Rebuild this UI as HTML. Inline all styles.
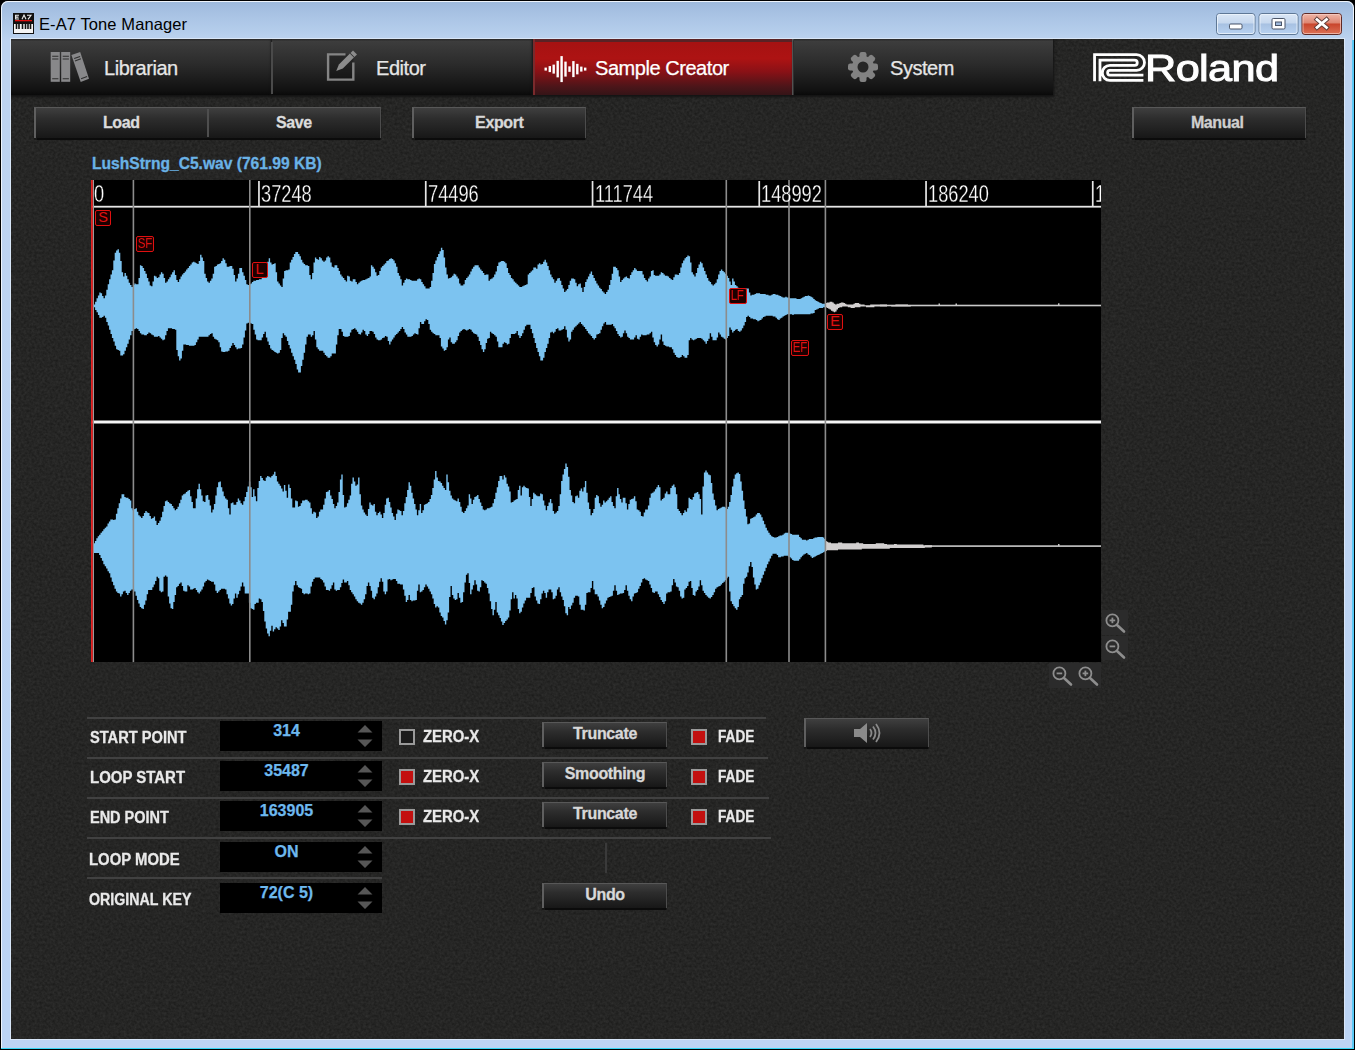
<!DOCTYPE html><html><head><meta charset="utf-8"><title>E-A7 Tone Manager</title><style>
*{box-sizing:border-box;margin:0;padding:0}
html,body{width:1355px;height:1050px;overflow:hidden;background:#000;font-family:"Liberation Sans",sans-serif;}
.abs{position:absolute}
#win{position:absolute;left:0;top:0;width:1355px;height:1050px;background:#000;overflow:hidden}
#frame{position:absolute;left:1px;top:1px;width:1353px;height:1048px;border-radius:7px 7px 0 0;
 background:linear-gradient(180deg,#9db9dc 0px,#a9c3e4 14px,#b4cdeb 30px,#bdd3f0 40px,#bcd4f4 100%);
 box-shadow:inset 0 0 0 1px #eef4fb;}
#cyanb{position:absolute;left:1px;top:1047.600px;width:1353px;height:1.400px;background:#35d6f5}
#cyanr{position:absolute;left:1352.400px;top:40px;width:1.400px;height:1008px;background:#5cc9f5}
#content{position:absolute;left:11px;top:39px;width:1333px;height:1000px;background:#252524;overflow:hidden;box-shadow:0 0 0 1px rgba(226,236,250,.75)}
#title{position:absolute;left:39px;top:14.5px;font-size:16.500px;color:#000;white-space:nowrap;letter-spacing:0.1px}
.tab{position:absolute;top:0;height:56px;box-shadow:0 1px 2px 1px #141414;background:linear-gradient(180deg,#2c2c2c 0,#2c2c2c 1px,#3d3d3d 2px,#2b2b2b 45%,#111 92%,#0a0a0a 100%);color:#e6e6e6;font-size:20px;white-space:nowrap}
.tab span{position:absolute;top:17.600px;letter-spacing:-0.45px;-webkit-text-stroke:0.25px currentColor}
.tsep{position:absolute;top:3px;width:2px;height:52px;background:#4a4a4a}
.btn{position:absolute;background:linear-gradient(180deg,#3f3f3f 0%,#2d2d2d 35%,#171717 100%);border-top:1px solid #585858;border-left:2px solid #5f5f5f;border-right:1.500px solid #4c4c4c;box-shadow:0 1.500px 1px #0b0b0b;color:#d8d8d8;-webkit-text-stroke:0.3px currentColor;font-weight:bold;font-size:16px;text-align:center;white-space:nowrap}
.lbl{position:absolute;color:#e9e9e9;-webkit-text-stroke:0.3px currentColor;font-weight:bold;font-size:16px;white-space:nowrap;transform-origin:0 0}
.val{position:absolute;left:209px;width:162px;height:30px;background:#000}
.val span{position:absolute;left:0;width:133px;text-align:center;top:1.500px;color:#6db8ee;-webkit-text-stroke:0.25px currentColor;font-weight:bold;font-size:16px;white-space:nowrap}
.hl{position:absolute;height:2px;background:#414141}
.cb{position:absolute;width:16px;height:16px;border:2px solid #9a9a9a;background:#1c1c1c}
.cb.on{background:#c3100f}
.mk{position:absolute;border:1.5px solid #e01010;border-radius:2px;color:#e01010;font-size:14.500px;line-height:13px;text-align:center;background:#1c0000;overflow:hidden;letter-spacing:-0.3px}.mk span{display:inline-block}.mk.w span{transform:scaleX(.8);margin:0 -3px}
.rt{position:absolute;top:0px;color:#fff;font-size:24px;white-space:nowrap;transform:scaleX(.76);transform-origin:0 0;-webkit-text-stroke:0.3px #000}
.tick{position:absolute;top:1px;width:2px;height:26px;background:#e8e8e8}
.vl{position:absolute;top:0;width:2px;height:481px;background:#8f8f8f}
</style></head><body>
<div id="win"><div id="frame"></div><div id="cyanb"></div><div id="cyanr"></div>
<svg class="abs" style="left:13px;top:13px" width="21" height="21" viewBox="0 0 21 21"><rect x="0" y="0" width="21" height="21" fill="#111"/><rect x="1" y="11" width="19" height="9" fill="#f4f4f4"/><path d="M6 2.200H2.600V6H6M2.600 4.100H5.500M9 6.300l2-4.300 2 4.300M14 2.200h4l-3 4.200" stroke="#eee" stroke-width="1.100" fill="none"/><rect x="2" y="7" width="17" height="1.3" fill="#e01010"/><path d="M3.5 10v6M6 10v6M9.5 10v6M12.5 10v6M15 10v6M17.5 10v6" stroke="#111" stroke-width="1.6"/></svg>
<div id="title">E-A7 Tone Manager</div>
<svg class="abs" style="left:1214px;top:11px" width="132" height="26" viewBox="0 0 132 26">
<defs><linearGradient id="wb" x1="0" y1="0" x2="0" y2="1"><stop offset="0" stop-color="#dbe7f6"/><stop offset=".45" stop-color="#c6d8ee"/><stop offset=".5" stop-color="#a7c1e2"/><stop offset="1" stop-color="#b9d3f2"/></linearGradient>
<linearGradient id="wr" x1="0" y1="0" x2="0" y2="1"><stop offset="0" stop-color="#efb8aa"/><stop offset=".45" stop-color="#de8672"/><stop offset=".5" stop-color="#c9452c"/><stop offset="1" stop-color="#dd7357"/></linearGradient></defs>
<rect x="2.500" y="2.500" width="38.500" height="21" rx="3" fill="url(#wb)" stroke="#5f7896"/><rect x="3.500" y="3.500" width="36.500" height="19" rx="2" fill="none" stroke="#eef5fc" stroke-opacity=".8"/>
<rect x="45" y="2.500" width="39" height="21" rx="3" fill="url(#wb)" stroke="#5f7896"/><rect x="46" y="3.500" width="37" height="19" rx="2" fill="none" stroke="#eef5fc" stroke-opacity=".8"/>
<rect x="88" y="2.500" width="39.500" height="21" rx="3" fill="url(#wr)" stroke="#5e2a26"/><rect x="89" y="3.500" width="37.500" height="19" rx="2" fill="none" stroke="#f6cfc6" stroke-opacity=".7"/>
<rect x="15.500" y="13" width="12.500" height="5" rx="1.200" fill="#fff" stroke="#4a5568"/>
<rect x="58" y="7.500" width="13" height="10.500" rx="1.200" fill="#fff" stroke="#4a5568"/><rect x="61.500" y="11" width="6" height="3.500" fill="#9db8dc" stroke="#4a5568"/>
<path d="M103 8.500l9.500 8M112.500 8.500l-9.500 8" stroke="#5b3a36" stroke-width="4.600" stroke-linecap="square"/><path d="M103 8.500l9.500 8M112.500 8.500l-9.500 8" stroke="#fff" stroke-width="2.800" stroke-linecap="square"/>
</svg>
<div id="content">
<svg class="abs" style="left:0;top:0" width="1333" height="1000"><filter id="nz" x="0" y="0" width="100%" height="100%" color-interpolation-filters="sRGB"><feTurbulence type="fractalNoise" baseFrequency="0.380" numOctaves="2" seed="7"/><feColorMatrix type="matrix" values="0.100 0 0 0 0.097  0.100 0 0 0 0.097  0.100 0 0 0 0.093  0 0 0 0 1"/></filter><rect width="1333" height="1000" filter="url(#nz)"/></svg>
<div class="tab" style="left:0;width:261px"><span style="left:93px">Librarian</span></div>
<div class="tab" style="left:261px;width:261px"><span style="left:104px">Editor</span></div>
<div class="tab" style="left:522px;width:261px;background:linear-gradient(180deg,#5a2225 0,#5a2225 2.500px,#a61212 3.500px,#ad1313 35%,#8a1116 58%,#4c1519 85%,#351417 100%);color:#fff;border-left:2px solid #7a2a2c;border-right:2px solid #707070"><span style="left:60px">Sample Creator</span></div>
<div class="tab" style="left:783px;width:259px"><span style="left:96px">System</span></div>
<div class="tsep" style="left:260px"></div>
<svg class="abs" style="left:38px;top:12px" width="42" height="34" viewBox="0 0 42 34"><g fill="#88888a"><rect x="1.700" y="1" width="9.100" height="29.800"/><rect x="12.200" y="1" width="9" height="29.800"/><path d="M22.400 4.100L31.200 1L40 27.700L31.700 31Z"/></g><g stroke="#2e2e2e" stroke-width="1.100" fill="none"><path d="M3.200 5.300h6.200M3.200 8h6.200M3.200 27.700h6.200M13.700 5.300h6.200M13.700 8h6.200M13.700 27.700h6.200M25.2 7.5L31.1 5.4M26.0 9.9L31.9 7.8M32.1 27.7L38.1 25.6"/></g></svg>
<svg class="abs" style="left:314px;top:9px" width="36" height="36" viewBox="0 0 36 36"><rect x="3.100" y="6.400" width="25.200" height="25.200" fill="#000" fill-opacity=".22"/><path d="M20.500 6.400H3.100V31.600H28.300V14.500" fill="none" stroke="#858585" stroke-width="2.400"/><path d="M11.200 23L13.900 16.400L24.900 5.600L28.900 9.600L17.800 20.400Z" fill="#8c8c8c"/><path d="M25.500 5L28 2.500L32 6.500L29.400 9Z" fill="#8c8c8c"/></svg>
<svg class="abs" style="left:0;top:0" width="600" height="57" viewBox="0 0 600 57"><g fill="#fff"><rect x="533.5" y="28.60" width="2.400" height="3.0"/><rect x="537.6" y="27.10" width="2.400" height="6.0"/><rect x="541.5" y="25.60" width="2.400" height="9.0"/><rect x="545.5" y="21.85" width="2.400" height="16.5"/><rect x="549.4" y="17.10" width="2.400" height="26.0"/><rect x="553.3" y="22.60" width="2.400" height="15.0"/><rect x="557.3" y="27.35" width="2.400" height="5.5"/><rect x="561.2" y="22.10" width="2.400" height="16.0"/><rect x="565.1" y="24.85" width="2.400" height="10.5"/><rect x="569.1" y="27.60" width="2.400" height="5.0"/><rect x="573.0" y="28.60" width="2.400" height="3.0"/></g></svg>
<svg class="abs" style="left:834.900px;top:10.800px" width="34" height="34" viewBox="-17 -17 34 34"><g fill="#828282"><circle r="11"/><rect x="-3.500" y="-15" width="7" height="8" rx="2.200" transform="rotate(0)"/><rect x="-3.500" y="-15" width="7" height="8" rx="2.200" transform="rotate(45)"/><rect x="-3.500" y="-15" width="7" height="8" rx="2.200" transform="rotate(90)"/><rect x="-3.500" y="-15" width="7" height="8" rx="2.200" transform="rotate(135)"/><rect x="-3.500" y="-15" width="7" height="8" rx="2.200" transform="rotate(180)"/><rect x="-3.500" y="-15" width="7" height="8" rx="2.200" transform="rotate(225)"/><rect x="-3.500" y="-15" width="7" height="8" rx="2.200" transform="rotate(270)"/><rect x="-3.500" y="-15" width="7" height="8" rx="2.200" transform="rotate(315)"/></g><circle r="5.500" fill="#262626"/></svg>
<svg class="abs" style="left:1070px;top:0px" width="80" height="57" viewBox="1081 39 80 57"><g fill="none" stroke="#fff" stroke-width="2.800">
<path d="M1094.560 81.160V54.710H1136.650A7.850 7.850 0 0 1 1136.650 70.410H1109.790A2.330 2.330 0 0 0 1109.790 75.060H1143.400"/>
<path d="M1099.980 81.160V60.080H1134.590A2.660 2.660 0 0 1 1134.590 65.400H1109.790A7.490 7.490 0 0 0 1109.790 80.380H1143.400"/>
</g></svg>
<div class="abs" style="left:1134px;top:8.500px;color:#fff;font-size:36.500px;letter-spacing:-0.5px;-webkit-text-stroke:1px #fff;white-space:nowrap;transform:scaleX(1.185);transform-origin:0 0">Roland</div>
<div class="btn" style="left:23px;top:68px;width:346.500px;height:31px"></div>
<div class="abs" style="left:196px;top:70px;width:2px;height:28px;background:#4e4e4e"></div>
<div class="lbl" style="left:92px;top:74.700px;color:#dcdcdc;letter-spacing:-0.4px">Load</div>
<div class="lbl" style="left:265px;top:74.700px;color:#dcdcdc;letter-spacing:-0.4px">Save</div>
<div class="btn" style="left:400.500px;top:68px;width:174.500px;height:31px;line-height:29.500px;letter-spacing:-0.4px">Export</div>
<div class="btn" style="left:1120.500px;top:68px;width:174.500px;height:31px;line-height:29.500px;letter-spacing:-0.4px;color:#cfcfcf;padding-right:4px">Manual</div>
<div class="lbl" style="left:81px;top:115.800px;color:#6ab2e6;font-size:15.600px">LushStrng_C5.wav (761.99 KB)</div>
<div class="abs" id="wave" style="left:80px;top:141px;width:1010px;height:481.500px;background:#000;overflow:hidden">
<svg class="abs" style="left:0;top:0" width="1011" height="482" viewBox="91 180 1011 482">
<rect x="880" y="304.700" width="221" height="1.600" fill="#c9c9c9"/><rect x="938.500" y="303.500" width="1.500" height="2" fill="#c9c9c9"/><rect x="955.500" y="303.500" width="1.500" height="2" fill="#c9c9c9"/><rect x="1058" y="303.300" width="1.500" height="2" fill="#c9c9c9"/><rect x="1058" y="544" width="1.500" height="2" fill="#c9c9c9"/>
<rect x="925" y="545.300" width="176" height="1.600" fill="#c9c9c9"/>
<path d="M93.7 304.5V304.5H95.1V301.7H96.5V298.2H97.9V295.4H99.3V292.6H100.7V293.3H102.1V296.1H103.5V298.2H104.9V295.4H106.3V289.8H107.7V284.2H109.1V279.3H110.5V274.4H111.9V270.2H113.3V260.4H114.7V252.7H116.1V250.6H117.5V249.2H118.9V252.7H120.3V261.1H121.7V272.3H123.1V276.5H124.5V273.0H125.9V275.8H127.3V279.3H128.7V282.8H130.1V284.9H131.5V287.0H132.9V284.9H134.3V283.5H135.7V284.2H137.1V284.2H138.5V277.9H139.9V265.3H141.3V266.0H142.7V268.1H144.1V270.9H145.5V273.7H146.9V277.9H148.3V281.4H149.7V285.6H151.1V286.3H152.5V281.4H153.9V275.8H155.3V276.5H156.7V277.9H158.1V277.2H159.5V274.4H160.9V272.3H162.3V273.7H163.7V277.9H165.1V282.8H166.5V281.4H167.9V279.3H169.3V277.2H170.7V274.4H172.1V272.3H173.5V270.2H174.9V275.1H176.3V280.0H177.7V282.1H179.1V279.3H180.5V276.5H181.9V274.4H183.3V273.0H184.7V271.6H186.1V269.5H187.5V268.1H188.9V266.0H190.3V264.6H191.7V262.5H193.1V261.8H194.5V262.5H195.9V263.2H197.3V263.9H198.7V261.1H200.1V254.8H201.5V257.6H202.9V261.1H204.3V273.7H205.7V277.9H207.1V281.4H208.5V282.8H209.9V280.7H211.3V278.6H212.7V273.7H214.1V266.7H215.5V266.0H216.9V264.6H218.3V263.9H219.7V263.2H221.1V261.1H222.5V258.3H223.9V259.7H225.3V263.2H226.7V266.7H228.1V266.7H229.5V266.0H230.9V266.0H232.3V268.8H233.7V275.1H235.1V281.4H236.5V278.6H237.9V273.7H239.3V268.1H240.7V268.1H242.1V272.3H243.5V275.8H244.9V280.0H246.3V284.2H247.7V284.9H249.1V284.2H250.5V283.5H251.9V282.1H253.3V280.7H254.7V280.7H256.1V280.0H257.5V280.0H258.9V279.3H260.3V279.3H261.7V276.5H263.1V273.0H264.5V269.5H265.9V266.0H267.3V261.8H268.7V258.3H270.1V262.5H271.5V264.6H272.9V263.9H274.3V263.2H275.7V272.3H277.1V281.4H278.5V283.5H279.9V285.6H281.3V287.0H282.7V278.6H284.1V270.9H285.5V270.2H286.9V270.2H288.3V269.5H289.7V262.5H291.1V259.7H292.5V256.9H293.9V254.1H295.3V252.0H296.7V252.0H298.1V254.1H299.5V256.2H300.9V259.7H302.3V262.5H303.7V263.9H305.1V265.3H306.5V265.3H307.9V266.0H309.3V275.1H310.7V279.3H312.1V273.0H313.5V262.5H314.9V257.6H316.3V259.0H317.7V259.7H319.1V256.9H320.5V258.3H321.9V260.4H323.3V261.8H324.7V260.4H326.1V257.6H327.5V256.2H328.9V257.6H330.3V262.5H331.7V266.7H333.1V267.4H334.5V265.3H335.9V265.3H337.3V268.1H338.7V270.9H340.1V274.4H341.5V276.5H342.9V277.9H344.3V280.0H345.7V281.4H347.1V275.8H348.5V276.5H349.9V280.7H351.3V281.4H352.7V279.3H354.1V279.3H355.5V282.1H356.9V284.2H358.3V282.8H359.7V281.4H361.1V280.7H362.5V280.0H363.9V280.0H365.3V279.3H366.7V278.6H368.1V277.9H369.5V276.5H370.9V265.3H372.3V266.7H373.7V268.8H375.1V272.3H376.5V275.8H377.9V275.1H379.3V270.9H380.7V267.4H382.1V266.0H383.5V264.6H384.9V263.2H386.3V261.1H387.7V260.4H389.1V259.0H390.5V258.3H391.9V259.0H393.3V260.4H394.7V263.2H396.1V266.7H397.5V273.0H398.9V275.8H400.3V279.3H401.7V285.6H403.1V282.8H404.5V280.0H405.9V278.6H407.3V279.3H408.7V279.3H410.1V280.0H411.5V280.7H412.9V280.7H414.3V280.7H415.7V280.7H417.1V279.3H418.5V278.6H419.9V279.3H421.3V282.1H422.7V284.2H424.1V286.3H425.5V288.4H426.9V288.4H428.3V288.4H429.7V287.0H431.1V280.7H432.5V273.0H433.9V263.9H435.3V260.4H436.7V256.9H438.1V254.1H439.5V251.3H440.9V247.8H442.3V249.9H443.7V257.6H445.1V267.4H446.5V274.4H447.9V278.6H449.3V277.9H450.7V277.2H452.1V275.8H453.5V273.7H454.9V274.4H456.3V276.5H457.7V278.6H459.1V283.5H460.5V285.6H461.9V285.6H463.3V284.2H464.7V280.0H466.1V277.9H467.5V276.5H468.9V274.4H470.3V271.6H471.7V268.8H473.1V266.7H474.5V265.3H475.9V265.3H477.3V265.3H478.7V267.4H480.1V269.5H481.5V270.9H482.9V273.0H484.3V275.1H485.7V274.4H487.1V274.4H488.5V280.7H489.9V279.3H491.3V278.6H492.7V277.2H494.1V274.4H495.5V271.6H496.9V266.0H498.3V262.5H499.7V261.8H501.1V261.1H502.5V261.1H503.9V261.8H505.3V263.2H506.7V268.1H508.1V273.0H509.5V275.1H510.9V277.9H512.3V279.3H513.7V281.4H515.1V282.8H516.5V284.2H517.9V285.6H519.3V287.0H520.7V287.0H522.1V286.3H523.5V285.6H524.9V284.9H526.3V284.2H527.7V274.4H529.1V273.0H530.5V271.6H531.9V270.2H533.3V267.4H534.7V267.4H536.1V268.8H537.5V264.6H538.9V263.2H540.3V264.6H541.7V263.9H543.1V261.8H544.5V259.7H545.9V262.5H547.3V266.0H548.7V270.2H550.1V274.4H551.5V277.2H552.9V279.3H554.3V282.8H555.7V280.7H557.1V278.6H558.5V277.9H559.9V280.7H561.3V284.9H562.7V288.4H564.1V291.9H565.5V290.5H566.9V289.1H568.3V284.9H569.7V280.7H571.1V278.6H572.5V278.6H573.9V279.3H575.3V282.8H576.7V286.3H578.1V284.2H579.5V283.5H580.9V287.7H582.3V291.9H583.7V287.0H585.1V282.1H586.5V279.3H587.9V276.5H589.3V273.7H590.7V271.6H592.1V275.1H593.5V277.9H594.9V280.7H596.3V283.5H597.7V285.6H599.1V287.7H600.5V289.1H601.9V291.2H603.3V292.6H604.7V294.0H606.1V291.9H607.5V289.8H608.9V284.9H610.3V280.0H611.7V273.7H613.1V266.7H614.5V266.7H615.9V268.1H617.3V270.2H618.7V276.5H620.1V282.1H621.5V280.0H622.9V278.6H624.3V277.2H625.7V276.5H627.1V277.9H628.5V278.6H629.9V275.1H631.3V272.3H632.7V270.2H634.1V268.1H635.5V269.5H636.9V270.9H638.3V270.9H639.7V270.9H641.1V270.9H642.5V274.4H643.9V277.9H645.3V280.0H646.7V281.4H648.1V278.6H649.5V276.5H650.9V270.9H652.3V270.2H653.7V275.1H655.1V275.8H656.5V275.8H657.9V275.8H659.3V274.4H660.7V272.3H662.1V273.0H663.5V274.4H664.9V275.8H666.3V275.8H667.7V276.5H669.1V277.9H670.5V279.3H671.9V280.0H673.3V277.2H674.7V274.4H676.1V274.4H677.5V275.1H678.9V273.0H680.3V267.4H681.7V263.2H683.1V260.4H684.5V258.3H685.9V256.9H687.3V255.5H688.7V256.2H690.1V262.5H691.5V272.3H692.9V274.4H694.3V276.5H695.7V273.0H697.1V268.1H698.5V264.6H699.9V261.8H701.3V263.2H702.7V267.4H704.1V270.9H705.5V274.4H706.9V277.9H708.3V280.7H709.7V282.1H711.1V284.2H712.5V285.6H713.9V284.2H715.3V282.8H716.7V279.3H718.1V274.4H719.5V270.9H720.9V269.5H722.3V270.9H723.7V272.3H725.1V273.7H726.5V275.8H727.9V277.9H729.3V281.4H730.7V284.9H732.1V278.6H733.5V281.4H734.9V284.9H736.3V286.3H737.7V287.7H739.1V288.4H740.5V288.4H741.9V288.4H743.3V288.4H744.7V288.4H746.1V288.4H747.5V288.4H748.9V292.6H750.3V295.4H751.7V294.7H753.1V294.7H754.5V294.0H755.9V293.3H757.3V293.3H758.7V293.3H760.1V294.0H761.5V294.0H762.9V294.0H764.3V294.0H765.7V294.7H767.1V294.7H768.5V295.4H769.9V295.4H771.3V294.7H772.7V294.0H774.1V294.0H775.5V294.7H776.9V294.7H778.3V295.4H779.7V296.1H781.1V296.8H782.5V297.5H783.9V297.5H785.3V296.8H786.7V297.5H788.1V297.5H789.5V298.2H790.9V298.2H792.3V298.2H793.7V298.2H795.1V298.2H796.5V298.9H797.9V298.9H799.3V298.9H800.7V298.2H802.1V297.5H803.5V296.8H804.9V296.1H806.3V296.1H807.7V295.4H809.1V296.1H810.5V296.8H811.9V297.5H813.3V298.9H814.7V300.3H816.1V301.0H817.5V301.7H818.9V302.4H820.3V303.1H821.7V303.8H823.1V303.8H824.5V303.8H825.4V307.3H824.5V307.3H823.1V308.0H821.7V308.0H820.3V308.0H818.9V308.7H817.5V309.4H816.1V310.1H814.7V312.9H813.3V313.6H811.9V313.6H810.5V314.3H809.1V314.3H807.7V314.3H806.3V314.3H804.9V314.3H803.5V314.3H802.1V314.3H800.7V314.3H799.3V314.3H797.9V314.3H796.5V314.3H795.1V314.3H793.7V315.0H792.3V314.3H790.9V314.3H789.5V314.3H788.1V314.3H786.7V315.0H785.3V315.7H783.9V316.4H782.5V317.8H781.1V318.5H779.7V319.9H778.3V319.2H776.9V317.8H775.5V316.4H774.1V316.4H772.7V315.7H771.3V315.7H769.9V315.7H768.5V315.7H767.1V315.7H765.7V316.4H764.3V317.1H762.9V318.5H761.5V319.9H760.1V320.6H758.7V321.3H757.3V319.9H755.9V319.2H754.5V319.2H753.1V318.5H751.7V318.5H750.3V317.1H748.9V315.7H747.5V317.1H746.1V322.0H744.7V325.5H743.3V328.3H741.9V330.4H740.5V331.8H739.1V331.1H737.7V329.0H736.3V329.7H734.9V331.1H733.5V332.5H732.1V329.7H730.7V327.6H729.3V336.0H727.9V338.1H726.5V339.5H725.1V338.8H723.7V337.4H722.3V336.7H720.9V334.6H719.5V332.5H718.1V337.4H716.7V340.2H715.3V340.2H713.9V340.2H712.5V336.7H711.1V333.2H709.7V338.8H708.3V340.9H706.9V343.7H705.5V341.6H704.1V340.2H702.7V338.8H701.3V338.1H699.9V338.1H698.5V338.1H697.1V338.8H695.7V339.5H694.3V340.2H692.9V339.5H691.5V338.1H690.1V340.2H688.7V354.9H687.3V357.7H685.9V357.7H684.5V356.3H683.1V354.9H681.7V357.0H680.3V357.7H678.9V357.7H677.5V357.0H676.1V354.9H674.7V352.8H673.3V349.3H671.9V347.2H670.5V347.2H669.1V346.5H667.7V346.5H666.3V345.8H664.9V345.1H663.5V341.6H662.1V334.6H660.7V339.5H659.3V344.4H657.9V346.5H656.5V345.1H655.1V342.3H653.7V337.4H652.3V331.8H650.9V333.2H649.5V334.6H648.1V334.6H646.7V335.3H645.3V335.3H643.9V335.3H642.5V334.6H641.1V336.7H639.7V339.5H638.3V338.8H636.9V335.3H635.5V337.4H634.1V339.5H632.7V339.5H631.3V339.5H629.9V338.1H628.5V336.7H627.1V333.2H625.7V330.4H624.3V333.2H622.9V336.7H621.5V337.4H620.1V336.0H618.7V333.9H617.3V331.1H615.9V328.3H614.5V326.2H613.1V324.1H611.7V324.8H610.3V324.8H608.9V324.8H607.5V324.8H606.1V322.0H604.7V323.4H603.3V326.2H601.9V329.7H600.5V333.2H599.1V333.9H597.7V334.6H596.3V338.1H594.9V339.5H593.5V338.1H592.1V336.0H590.7V334.6H589.3V333.2H587.9V331.1H586.5V329.0H585.1V326.9H583.7V325.5H582.3V324.1H580.9V322.0H579.5V323.4H578.1V324.8H576.7V326.2H575.3V327.6H573.9V329.7H572.5V331.8H571.1V339.5H569.7V341.6H568.3V337.4H566.9V329.7H565.5V326.2H564.1V329.0H562.7V329.7H561.3V330.4H559.9V330.4H558.5V328.3H557.1V329.0H555.7V331.8H554.3V333.2H552.9V331.8H551.5V332.5H550.1V338.1H548.7V343.7H547.3V347.9H545.9V352.1H544.5V357.7H543.1V360.5H541.7V360.5H540.3V356.3H538.9V352.1H537.5V347.9H536.1V343.0H534.7V338.1H533.3V333.2H531.9V329.0H530.5V324.8H529.1V324.8H527.7V324.8H526.3V326.2H524.9V329.7H523.5V333.2H522.1V336.0H520.7V338.1H519.3V335.3H517.9V331.1H516.5V333.2H515.1V333.9H513.7V333.9H512.3V333.9H510.9V338.1H509.5V343.7H508.1V344.4H506.7V343.0H505.3V342.3H503.9V343.7H502.5V347.2H501.1V347.2H499.7V347.2H498.3V341.6H496.9V336.7H495.5V335.3H494.1V333.9H492.7V333.2H491.3V331.8H489.9V338.1H488.5V338.8H487.1V343.0H485.7V349.3H484.3V352.1H482.9V349.3H481.5V345.1H480.1V340.9H478.7V336.7H477.3V334.6H475.9V333.9H474.5V333.2H473.1V331.8H471.7V329.7H470.3V329.0H468.9V329.7H467.5V330.4H466.1V329.7H464.7V329.0H463.3V329.7H461.9V331.1H460.5V332.5H459.1V336.0H457.7V340.2H456.3V342.3H454.9V343.7H453.5V343.7H452.1V342.3H450.7V337.4H449.3V339.5H447.9V347.2H446.5V350.0H445.1V350.7H443.7V348.6H442.3V346.5H440.9V338.1H439.5V335.3H438.1V335.3H436.7V335.3H435.3V333.9H433.9V333.2H432.5V331.8H431.1V329.7H429.7V324.1H428.3V319.9H426.9V319.2H425.5V321.3H424.1V324.1H422.7V324.1H421.3V322.0H419.9V328.3H418.5V334.6H417.1V333.9H415.7V333.2H414.3V334.6H412.9V336.0H411.5V336.7H410.1V336.7H408.7V336.7H407.3V334.6H405.9V332.5H404.5V329.0H403.1V326.9H401.7V329.0H400.3V331.1H398.9V332.5H397.5V333.9H396.1V335.3H394.7V337.4H393.3V339.5H391.9V341.6H390.5V344.4H389.1V340.9H387.7V336.7H386.3V336.0H384.9V337.4H383.5V338.1H382.1V339.5H380.7V340.2H379.3V340.2H377.9V339.5H376.5V337.4H375.1V333.9H373.7V331.8H372.3V331.1H370.9V331.1H369.5V333.9H368.1V336.0H366.7V334.6H365.3V331.1H363.9V329.7H362.5V332.5H361.1V334.6H359.7V333.9H358.3V331.8H356.9V329.7H355.5V328.3H354.1V329.0H352.7V329.7H351.3V332.5H349.9V336.0H348.5V336.7H347.1V336.7H345.7V336.7H344.3V336.0H342.9V331.8H341.5V329.0H340.1V329.0H338.7V335.3H337.3V344.4H335.9V353.5H334.5V353.5H333.1V353.5H331.7V356.3H330.3V357.7H328.9V357.7H327.5V356.3H326.1V354.9H324.7V352.8H323.3V350.7H321.9V350.7H320.5V350.7H319.1V349.3H317.7V347.2H316.3V339.5H314.9V331.1H313.5V335.3H312.1V336.7H310.7V334.6H309.3V334.6H307.9V336.7H306.5V344.4H305.1V352.8H303.7V359.8H302.3V366.1H300.9V372.4H299.5V372.4H298.1V369.6H296.7V364.0H295.3V359.8H293.9V356.3H292.5V352.8H291.1V348.6H289.7V345.1H288.3V340.9H286.9V336.7H285.5V335.3H284.1V333.2H282.7V338.1H281.3V350.0H279.9V352.8H278.5V353.5H277.1V352.8H275.7V352.1H274.3V350.7H272.9V350.0H271.5V348.6H270.1V345.1H268.7V341.6H267.3V337.4H265.9V331.8H264.5V333.9H263.1V337.4H261.7V340.2H260.3V340.2H258.9V340.2H257.5V339.5H256.1V334.6H254.7V329.7H253.3V324.1H251.9V323.4H250.5V322.7H249.1V322.7H247.7V323.4H246.3V330.4H244.9V337.4H243.5V344.4H242.1V347.9H240.7V348.6H239.3V348.6H237.9V349.3H236.5V347.2H235.1V345.1H233.7V343.0H232.3V345.8H230.9V347.9H229.5V350.7H228.1V351.4H226.7V351.4H225.3V352.1H223.9V352.1H222.5V351.4H221.1V347.2H219.7V342.3H218.3V340.2H216.9V339.5H215.5V338.8H214.1V336.7H212.7V333.2H211.3V333.9H209.9V335.3H208.5V336.7H207.1V336.7H205.7V336.7H204.3V336.7H202.9V336.7H201.5V336.7H200.1V336.7H198.7V339.5H197.3V342.3H195.9V345.1H194.5V345.8H193.1V345.8H191.7V345.8H190.3V345.8H188.9V345.1H187.5V345.1H186.1V344.4H184.7V344.4H183.3V350.7H181.9V358.4H180.5V360.5H179.1V356.3H177.7V350.0H176.3V329.7H174.9V329.0H173.5V329.0H172.1V328.3H170.7V328.3H169.3V328.3H167.9V331.1H166.5V335.3H165.1V339.5H163.7V340.2H162.3V338.8H160.9V337.4H159.5V336.0H158.1V336.7H156.7V336.7H155.3V336.7H153.9V335.3H152.5V334.6H151.1V333.2H149.7V332.5H148.3V333.9H146.9V335.3H145.5V335.3H144.1V334.6H142.7V334.6H141.3V333.2H139.9V331.1H138.5V329.0H137.1V328.3H135.7V329.0H134.3V330.4H132.9V331.1H131.5V335.3H130.1V339.5H128.7V343.7H127.3V347.2H125.9V350.7H124.5V354.2H123.1V355.6H121.7V355.6H120.3V350.7H118.9V350.0H117.5V349.3H116.1V345.8H114.7V341.6H113.3V338.1H111.9V333.9H110.5V329.7H109.1V325.5H107.7V322.0H106.3V317.8H104.9V315.7H103.5V317.1H102.1V317.8H100.7V317.8H99.3V315.0H97.9V312.2H96.5V310.1H95.1V307.3H93.7Z" fill="#7cc3f0"/>
<path d="M825.4 303.1V303.1H826.8V302.4H828.2V302.4H829.6V301.7H831.0V301.7H832.4V302.4H833.8V303.8H835.2V304.5H836.6V303.8H838.0V303.8H839.4V303.1H840.8V302.4H842.2V302.4H843.6V303.1H845.0V303.8H846.4V304.5H847.8V304.5H849.2V304.5H850.6V304.5H852.0V304.5H853.4V303.8H854.8V303.1H856.2V303.1H857.6V303.1H859.0V303.8H860.4V304.5H861.8V304.5H863.2V304.5H864.6V305.2H866.0V305.2H867.4V305.2H868.8V305.2H870.2V304.5H871.6V304.5H873.0V304.5H874.4V304.5H875.8V304.5H877.2V304.5H878.6V304.5H880.0V304.5H881.4V304.5H882.8V304.5H884.2V304.5H885.6V304.5H887.0V305.2H888.4V305.2H889.8V305.2H891.2V305.2H892.6V305.2H894.0V305.2H895.4V304.5H896.8V304.5H898.2V304.5H899.6V304.5H901.0V304.5H902.4V304.5H903.8V304.5H905.2V304.5H906.6V304.5H908.0V305.2H909.4V305.2H910.8V305.2H911.0V305.9H910.8V306.6H909.4V306.6H908.0V306.6H906.6V306.6H905.2V306.6H903.8V306.6H902.4V306.6H901.0V306.6H899.6V306.6H898.2V306.6H896.8V306.6H895.4V306.6H894.0V306.6H892.6V306.6H891.2V305.9H889.8V305.9H888.4V305.9H887.0V306.6H885.6V306.6H884.2V306.6H882.8V306.6H881.4V306.6H880.0V306.6H878.6V306.6H877.2V306.6H875.8V306.6H874.4V307.3H873.0V307.3H871.6V307.3H870.2V307.3H868.8V307.3H867.4V307.3H866.0V306.6H864.6V306.6H863.2V306.6H861.8V306.6H860.4V307.3H859.0V307.3H857.6V307.3H856.2V307.3H854.8V308.0H853.4V308.0H852.0V308.0H850.6V307.3H849.2V307.3H847.8V306.6H846.4V306.6H845.0V306.6H843.6V306.6H842.2V307.3H840.8V307.3H839.4V308.0H838.0V309.4H836.6V311.5H835.2V312.2H833.8V311.5H832.4V310.8H831.0V309.4H829.6V308.7H828.2V308.0H826.8V307.3H825.4Z" fill="#d2cfcf"/>
<path d="M93.5 543.2V543.2H94.9V541.1H96.3V538.3H97.7V536.2H99.1V534.8H100.5V532.7H101.9V531.3H103.3V529.2H104.7V527.8H106.1V526.4H107.5V523.6H108.9V521.5H110.3V519.4H111.7V519.4H113.1V520.1H114.5V519.4H115.9V513.8H117.3V508.2H118.7V503.3H120.1V498.4H121.5V494.2H122.9V494.2H124.3V497.0H125.7V497.7H127.1V497.7H128.5V499.1H129.9V500.5H131.3V508.2H132.7V510.3H134.1V508.9H135.5V508.2H136.9V511.7H138.3V515.2H139.7V516.6H141.1V518.0H142.5V515.9H143.9V513.1H145.3V511.0H146.7V512.4H148.1V513.1H149.5V515.9H150.9V518.7H152.3V518.0H153.7V516.6H155.1V520.8H156.5V525.0H157.9V522.9H159.3V520.8H160.7V517.3H162.1V511.7H163.5V506.1H164.9V501.2H166.3V500.5H167.7V501.9H169.1V503.3H170.5V504.0H171.9V506.1H173.3V508.2H174.7V510.3H176.1V508.9H177.5V506.8H178.9V503.3H180.3V499.8H181.7V495.6H183.1V494.2H184.5V493.5H185.9V492.1H187.3V490.7H188.7V490.0H190.1V496.3H191.5V501.9H192.9V508.2H194.3V508.2H195.7V498.4H197.1V489.3H198.5V483.7H199.9V489.3H201.3V495.6H202.7V501.2H204.1V501.9H205.5V495.6H206.9V494.9H208.3V499.8H209.7V505.4H211.1V512.4H212.5V509.6H213.9V504.0H215.3V495.6H216.7V487.2H218.1V482.3H219.5V481.6H220.9V487.2H222.3V491.4H223.7V496.3H225.1V498.4H226.5V499.8H227.9V508.2H229.3V514.5H230.7V503.3H232.1V502.6H233.5V504.7H234.9V504.7H236.3V501.9H237.7V498.4H239.1V500.5H240.5V503.3H241.9V504.7H243.3V501.2H244.7V497.0H246.1V492.1H247.5V486.5H248.9V481.6H250.3V487.2H251.7V497.0H253.1V489.3H254.5V496.3H255.9V501.2H257.3V487.9H258.7V480.9H260.1V476.0H261.5V478.1H262.9V480.2H264.3V480.9H265.7V477.4H267.1V476.0H268.5V476.7H269.9V477.4H271.3V476.0H272.7V474.6H274.1V471.8H275.5V476.0H276.9V481.6H278.3V483.7H279.7V485.8H281.1V488.6H282.5V491.4H283.9V485.1H285.3V490.7H286.7V497.7H288.1V484.4H289.5V487.9H290.9V498.4H292.3V507.5H293.7V507.5H295.1V500.5H296.5V501.2H297.9V506.8H299.3V506.1H300.7V503.3H302.1V500.5H303.5V500.5H304.9V499.8H306.3V499.8H307.7V501.2H309.1V502.6H310.5V508.2H311.9V513.8H313.3V511.7H314.7V512.4H316.1V518.0H317.5V516.6H318.9V511.7H320.3V509.6H321.7V509.6H323.1V504.7H324.5V498.4H325.9V492.1H327.3V491.4H328.7V490.0H330.1V495.6H331.5V499.1H332.9V504.0H334.3V508.2H335.7V506.1H337.1V502.6H338.5V492.1H339.9V479.5H341.3V474.6H342.7V494.9H344.1V507.5H345.5V506.8H346.9V503.3H348.3V499.8H349.7V495.6H351.1V483.7H352.5V477.4H353.9V481.6H355.3V485.8H356.7V484.4H358.1V477.4H359.5V494.2H360.9V505.4H362.3V509.6H363.7V512.4H365.1V514.5H366.5V515.9H367.9V508.9H369.3V502.6H370.7V504.7H372.1V505.4H373.5V504.0H374.9V511.7H376.3V515.2H377.7V513.1H379.1V511.7H380.5V514.5H381.9V518.0H383.3V513.1H384.7V504.7H386.1V498.4H387.5V497.7H388.9V501.9H390.3V507.5H391.7V513.1H393.1V516.6H394.5V520.1H395.9V513.8H397.3V509.6H398.7V510.3H400.1V511.0H401.5V515.2H402.9V511.0H404.3V503.3H405.7V497.0H407.1V490.0H408.5V482.3H409.9V485.8H411.3V492.8H412.7V498.4H414.1V504.0H415.5V509.6H416.9V515.2H418.3V510.3H419.7V504.0H421.1V513.1H422.5V510.3H423.9V504.7H425.3V504.0H426.7V503.3H428.1V501.9H429.5V499.1H430.9V494.9H432.3V487.9H433.7V479.5H435.1V471.1H436.5V477.4H437.9V480.9H439.3V481.6H440.7V483.0H442.1V485.8H443.5V487.9H444.9V490.0H446.3V474.6H447.7V482.3H449.1V490.7H450.5V495.6H451.9V498.4H453.3V499.8H454.7V500.5H456.1V501.2H457.5V498.4H458.9V501.9H460.3V506.8H461.7V511.7H463.1V513.1H464.5V511.0H465.9V508.2H467.3V505.4H468.7V494.2H470.1V498.4H471.5V504.0H472.9V499.8H474.3V497.0H475.7V496.3H477.1V494.9H478.5V499.1H479.9V502.6H481.3V506.1H482.7V509.6H484.1V510.3H485.5V509.6H486.9V508.2H488.3V508.2H489.7V507.5H491.1V506.8H492.5V503.3H493.9V499.1H495.3V492.8H496.7V487.2H498.1V480.9H499.5V476.0H500.9V476.0H502.3V479.5H503.7V475.3H505.1V477.4H506.5V483.7H507.9V486.5H509.3V491.4H510.7V502.6H512.1V501.9H513.5V500.5H514.9V499.8H516.3V499.1H517.7V490.0H519.1V485.8H520.5V495.6H521.9V487.2H523.3V485.8H524.7V487.2H526.1V487.9H527.5V488.6H528.9V497.0H530.3V506.1H531.7V499.1H533.1V492.8H534.5V494.2H535.9V495.6H537.3V496.3H538.7V496.3H540.1V493.5H541.5V494.2H542.9V500.5H544.3V505.4H545.7V510.3H547.1V506.1H548.5V502.6H549.9V499.1H551.3V503.3H552.7V511.0H554.1V513.8H555.5V512.4H556.9V511.0H558.3V506.1H559.7V494.2H561.1V480.9H562.5V474.6H563.9V469.0H565.3V463.4H566.7V466.9H568.1V476.7H569.5V490.0H570.9V495.6H572.3V501.9H573.7V503.3H575.1V496.3H576.5V495.6H577.9V497.7H579.3V490.7H580.7V488.6H582.1V491.4H583.5V487.2H584.9V480.9H586.3V492.8H587.7V502.6H589.1V508.9H590.5V515.2H591.9V513.1H593.3V508.9H594.7V497.7H596.1V494.9H597.5V496.3H598.9V503.3H600.3V506.8H601.7V504.7H603.1V500.5H604.5V502.6H605.9V501.2H607.3V499.8H608.7V497.7H610.1V496.3H611.5V501.9H612.9V506.1H614.3V508.2H615.7V496.3H617.1V487.9H618.5V494.2H619.9V499.1H621.3V502.6H622.7V497.7H624.1V497.7H625.5V503.3H626.9V509.6H628.3V504.0H629.7V499.8H631.1V499.1H632.5V498.4H633.9V496.3H635.3V501.2H636.7V509.6H638.1V510.3H639.5V511.7H640.9V515.9H642.3V516.6H643.7V512.4H645.1V509.6H646.5V509.6H647.9V505.4H649.3V497.7H650.7V493.5H652.1V492.8H653.5V491.4H654.9V489.3H656.3V487.2H657.7V485.1H659.1V487.2H660.5V500.5H661.9V499.1H663.3V497.7H664.7V493.5H666.1V491.4H667.5V494.2H668.9V494.2H670.3V487.9H671.7V485.8H673.1V484.4H674.5V487.2H675.9V494.2H677.3V508.9H678.7V511.0H680.1V513.1H681.5V515.2H682.9V513.1H684.3V510.3H685.7V511.7H687.1V508.2H688.5V497.7H689.9V499.1H691.3V499.8H692.7V497.0H694.1V493.5H695.5V492.8H696.9V492.1H698.3V494.2H699.7V499.1H701.1V514.5H702.5V486.5H703.9V472.5H705.3V470.4H706.7V472.5H708.1V474.6H709.5V475.3H710.9V483.0H712.3V493.5H713.7V499.8H715.1V505.4H716.5V510.3H717.9V508.9H719.3V508.2H720.7V507.5H722.1V506.8H723.5V506.8H724.9V507.5H726.3V508.9H727.7V506.8H729.1V501.9H730.5V494.9H731.9V486.5H733.3V478.8H734.7V474.6H736.1V473.2H737.5V472.5H738.9V473.9H740.3V481.6H741.7V490.7H743.1V500.5H744.5V508.9H745.9V516.6H747.3V524.3H748.7V523.6H750.1V518.7H751.5V518.0H752.9V517.3H754.3V516.6H755.7V514.5H757.1V513.1H758.5V513.1H759.9V514.5H761.3V517.3H762.7V520.8H764.1V524.3H765.5V527.8H766.9V530.6H768.3V532.7H769.7V534.8H771.1V536.2H772.5V536.9H773.9V537.6H775.3V537.6H776.7V536.9H778.1V536.2H779.5V535.5H780.9V535.5H782.3V534.8H783.7V533.4H785.1V532.7H786.5V532.7H787.9V532.7H789.3V533.4H790.7V534.1H792.1V534.8H793.5V534.8H794.9V534.8H796.3V534.8H797.7V534.8H799.1V536.9H800.5V538.3H801.9V539.7H803.3V539.7H804.7V539.7H806.1V540.4H807.5V539.7H808.9V539.0H810.3V539.0H811.7V539.0H813.1V538.3H814.5V537.6H815.9V537.6H817.3V536.9H818.7V536.9H820.1V536.9H821.5V536.9H822.9V537.6H824.3V539.0H825.4V551.6H824.3V552.3H822.9V553.0H821.5V553.7H820.1V554.4H818.7V555.1H817.3V555.8H815.9V556.5H814.5V557.2H813.1V557.9H811.7V556.5H810.3V555.1H808.9V554.4H807.5V553.0H806.1V553.7H804.7V554.4H803.3V555.8H801.9V557.2H800.5V559.3H799.1V560.7H797.7V560.7H796.3V560.7H794.9V560.7H793.5V560.0H792.1V558.6H790.7V557.2H789.3V556.5H787.9V555.8H786.5V555.8H785.1V555.8H783.7V556.5H782.3V556.5H780.9V557.2H779.5V557.2H778.1V555.1H776.7V553.7H775.3V553.7H773.9V553.7H772.5V555.8H771.1V558.6H769.7V561.4H768.3V564.2H766.9V567.7H765.5V571.2H764.1V574.7H762.7V578.2H761.3V582.4H759.9V585.2H758.5V588.7H757.1V589.4H755.7V584.5H754.3V577.5H752.9V567.0H751.5V562.1H750.1V566.3H748.7V572.6H747.3V576.8H745.9V578.2H744.5V583.8H743.1V595.0H741.7V597.1H740.3V599.2H738.9V606.9H737.5V609.7H736.1V608.3H734.7V606.2H733.3V604.1H731.9V601.3H730.5V591.5H729.1V576.8H727.7V578.2H726.3V580.3H724.9V581.7H723.5V583.1H722.1V584.5H720.7V585.9H719.3V586.6H717.9V587.3H716.5V588.7H715.1V592.2H713.7V595.0H712.3V597.1H710.9V598.5H709.5V597.8H708.1V596.4H706.7V595.0H705.3V592.9H703.9V590.8H702.5V585.2H701.1V580.3H699.7V586.6H698.3V590.1H696.9V591.5H695.5V595.7H694.1V595.0H692.7V588.0H691.3V581.0H689.9V581.7H688.5V585.9H687.1V588.0H685.7V589.4H684.3V597.8H682.9V598.5H681.5V596.4H680.1V590.8H678.7V587.3H677.3V586.6H675.9V582.4H674.5V578.9H673.1V585.2H671.7V591.5H670.3V592.2H668.9V592.2H667.5V593.6H666.1V601.3H664.7V604.1H663.3V602.0H661.9V599.9H660.5V597.1H659.1V594.3H657.7V591.5H656.3V591.5H654.9V592.9H653.5V592.2H652.1V588.0H650.7V584.5H649.3V581.0H647.9V580.3H646.5V579.6H645.1V578.2H643.7V578.9H642.3V582.4H640.9V585.9H639.5V588.7H638.1V592.2H636.7V592.9H635.3V593.6H633.9V596.4H632.5V601.3H631.1V599.2H629.7V595.7H628.3V590.8H626.9V585.2H625.5V590.1H624.1V592.9H622.7V593.6H621.3V593.6H619.9V594.3H618.5V595.0H617.1V590.8H615.7V585.2H614.3V590.8H612.9V595.7H611.5V596.4H610.1V597.1H608.7V597.8H607.3V600.6H605.9V603.4H604.5V606.9H603.1V608.3H601.7V604.8H600.3V600.6H598.9V596.4H597.5V594.3H596.1V594.3H594.7V589.4H593.3V581.0H591.9V588.0H590.5V592.2H589.1V592.2H587.7V592.9H586.3V604.8H584.9V610.4H583.5V609.7H582.1V609.7H580.7V604.8H579.3V596.4H577.9V595.7H576.5V595.7H575.1V597.8H573.7V602.7H572.3V605.5H570.9V609.0H569.5V606.9H568.1V615.3H566.7V613.2H565.3V606.2H563.9V599.9H562.5V596.4H561.1V592.2H559.7V587.3H558.3V589.4H556.9V595.7H555.5V598.5H554.1V599.2H552.7V592.2H551.3V589.4H549.9V589.4H548.5V592.2H547.1V597.8H545.7V592.9H544.3V590.8H542.9V593.6H541.5V599.2H540.1V604.1H538.7V603.4H537.3V600.6H535.9V596.4H534.5V587.3H533.1V588.0H531.7V592.9H530.3V597.8H528.9V597.8H527.5V597.8H526.1V600.6H524.7V603.4H523.3V607.6H521.9V611.8H520.5V613.2H519.1V609.0H517.7V598.5H516.3V595.0H514.9V598.5H513.5V592.2H512.1V599.2H510.7V610.4H509.3V617.4H507.9V619.5H506.5V620.9H505.1V623.0H503.7V625.1H502.3V621.6H500.9V618.1H499.5V615.3H498.1V612.5H496.7V602.0H495.3V609.7H493.9V615.3H492.5V609.0H491.1V601.3H489.7V593.6H488.3V588.0H486.9V583.8H485.5V582.4H484.1V581.0H482.7V580.3H481.3V587.3H479.9V591.5H478.5V590.8H477.1V584.5H475.7V580.3H474.3V585.2H472.9V589.4H471.5V594.3H470.1V583.1H468.7V573.3H467.3V574.7H465.9V582.4H464.5V592.2H463.1V602.0H461.7V602.7H460.3V597.8H458.9V592.9H457.5V599.2H456.1V599.9H454.7V598.5H453.3V595.0H451.9V585.9H450.5V597.1H449.1V612.5H447.7V620.2H446.3V624.4H444.9V620.9H443.5V617.4H442.1V616.0H440.7V612.5H439.3V607.6H437.9V606.2H436.5V607.6H435.1V604.1H433.7V598.5H432.3V594.3H430.9V591.5H429.5V588.7H428.1V586.6H426.7V584.5H425.3V587.3H423.9V590.1H422.5V591.5H421.1V592.2H419.7V584.5H418.3V590.8H416.9V599.9H415.5V600.6H414.1V600.6H412.7V601.3H411.3V599.9H409.9V595.0H408.5V599.9H407.1V602.0H405.7V595.7H404.3V589.4H402.9V584.5H401.5V584.5H400.1V583.8H398.7V583.8H397.3V581.0H395.9V578.9H394.5V578.9H393.1V579.6H391.7V580.3H390.3V578.9H388.9V579.6H387.5V591.5H386.1V594.3H384.7V591.5H383.3V581.7H381.9V578.2H380.5V581.7H379.1V587.3H377.7V593.6H376.3V596.4H374.9V599.2H373.5V597.8H372.1V590.8H370.7V585.9H369.3V582.4H367.9V585.9H366.5V594.3H365.1V599.2H363.7V602.7H362.3V604.8H360.9V603.4H359.5V602.7H358.1V601.3H356.7V599.2H355.3V596.4H353.9V594.3H352.5V592.2H351.1V590.1H349.7V585.2H348.3V581.0H346.9V582.4H345.5V582.4H344.1V579.6H342.7V583.1H341.3V587.3H339.9V590.1H338.5V590.1H337.1V590.8H335.7V589.4H334.3V582.4H332.9V585.2H331.5V588.7H330.1V590.8H328.7V590.1H327.3V590.1H325.9V586.6H324.5V582.4H323.1V580.3H321.7V578.9H320.3V577.5H318.9V577.5H317.5V577.5H316.1V577.5H314.7V578.9H313.3V581.7H311.9V586.6H310.5V593.6H309.1V594.3H307.7V593.6H306.3V593.6H304.9V594.3H303.5V592.9H302.1V588.7H300.7V588.0H299.3V587.3H297.9V585.2H296.5V581.0H295.1V585.2H293.7V591.5H292.3V604.8H290.9V611.8H289.5V611.8H288.1V619.5H286.7V626.5H285.3V626.5H283.9V623.0H282.5V620.2H281.1V626.5H279.7V630.0H278.3V628.6H276.9V627.2H275.5V629.3H274.1V631.4H272.7V625.8H271.3V630.7H269.9V636.3H268.5V633.5H267.1V628.6H265.7V621.6H264.3V611.1H262.9V602.0H261.5V599.2H260.1V598.5H258.7V602.7H257.3V602.7H255.9V604.1H254.5V609.7H253.1V609.0H251.7V608.3H250.3V602.7H248.9V593.6H247.5V593.6H246.1V593.6H244.7V586.6H243.3V582.4H241.9V586.6H240.5V590.8H239.1V594.3H237.7V597.8H236.3V593.6H234.9V598.5H233.5V604.1H232.1V605.5H230.7V603.4H229.3V598.5H227.9V594.3H226.5V589.4H225.1V588.7H223.7V588.7H222.3V588.7H220.9V590.1H219.5V591.5H218.1V592.9H216.7V590.8H215.3V584.5H213.9V581.7H212.5V581.7H211.1V581.0H209.7V580.3H208.3V579.6H206.9V581.0H205.5V582.4H204.1V586.6H202.7V589.4H201.3V591.5H199.9V593.6H198.5V592.2H197.1V590.1H195.7V588.0H194.3V588.7H192.9V589.4H191.5V589.4H190.1V586.6H188.7V585.2H187.3V591.5H185.9V591.5H184.5V590.8H183.1V585.9H181.7V582.4H180.3V583.8H178.9V585.9H177.5V587.3H176.1V595.0H174.7V602.0H173.3V609.0H171.9V608.3H170.5V603.4H169.1V596.4H167.7V576.8H166.3V575.4H164.9V576.8H163.5V591.5H162.1V592.2H160.7V590.8H159.3V578.2H157.9V576.8H156.5V581.0H155.1V584.5H153.7V587.3H152.3V590.1H150.9V590.1H149.5V590.1H148.1V594.3H146.7V600.6H145.3V604.8H143.9V609.0H142.5V608.3H141.1V606.9H139.7V603.4H138.3V599.9H136.9V595.7H135.5V591.5H134.1V589.4H132.7V589.4H131.3V590.8H129.9V592.9H128.5V595.0H127.1V592.9H125.7V590.8H124.3V591.5H122.9V594.3H121.5V596.4H120.1V593.6H118.7V592.9H117.3V591.5H115.9V588.7H114.5V585.2H113.1V581.7H111.7V577.5H110.3V573.3H108.9V571.2H107.5V568.4H106.1V566.3H104.7V564.2H103.3V560.7H101.9V557.9H100.5V555.1H99.1V553.0H97.7V553.0H96.3V553.0H94.9V553.0H93.5Z" fill="#7cc3f0"/>
<path d="M825.4 541.1V541.1H826.8V541.8H828.2V542.5H829.6V542.5H831.0V543.2H832.4V543.2H833.8V543.2H835.2V543.2H836.6V543.2H838.0V542.5H839.4V542.5H840.8V542.5H842.2V543.2H843.6V543.2H845.0V543.2H846.4V543.2H847.8V543.2H849.2V543.2H850.6V543.2H852.0V543.2H853.4V543.2H854.8V543.2H856.2V542.5H857.6V542.5H859.0V543.2H860.4V543.2H861.8V543.2H863.2V543.9H864.6V543.9H866.0V543.9H867.4V543.9H868.8V543.9H870.2V543.9H871.6V543.9H873.0V543.9H874.4V543.9H875.8V543.2H877.2V543.2H878.6V543.2H880.0V543.2H881.4V543.2H882.8V543.2H884.2V543.9H885.6V543.9H887.0V544.6H888.4V544.6H889.8V544.6H891.2V544.6H892.6V544.6H894.0V543.9H895.4V543.9H896.8V544.6H898.2V544.6H899.6V544.6H901.0V544.6H902.4V544.6H903.8V544.6H905.2V544.6H906.6V544.6H908.0V544.6H909.4V544.6H910.8V544.6H912.2V544.6H913.6V544.6H915.0V544.6H916.4V544.6H917.8V544.6H919.2V544.6H920.6V544.6H922.0V544.6H923.4V545.3H924.8V545.3H926.2V545.3H927.6V545.3H929.0V545.3H930.4V545.3H931.8V545.3H932.0V546.7H931.8V547.4H930.4V547.4H929.0V547.4H927.6V547.4H926.2V547.4H924.8V548.1H923.4V548.1H922.0V548.1H920.6V548.1H919.2V548.1H917.8V548.1H916.4V548.1H915.0V548.1H913.6V548.1H912.2V548.1H910.8V548.1H909.4V548.1H908.0V548.1H906.6V548.1H905.2V548.1H903.8V548.1H902.4V548.1H901.0V548.1H899.6V548.1H898.2V548.1H896.8V548.1H895.4V548.1H894.0V548.1H892.6V548.1H891.2V548.1H889.8V548.8H888.4V548.8H887.0V548.8H885.6V548.8H884.2V548.8H882.8V548.8H881.4V548.8H880.0V548.8H878.6V548.8H877.2V548.8H875.8V548.8H874.4V548.8H873.0V548.8H871.6V548.8H870.2V548.8H868.8V548.8H867.4V548.8H866.0V548.8H864.6V548.8H863.2V548.8H861.8V549.5H860.4V549.5H859.0V549.5H857.6V549.5H856.2V549.5H854.8V549.5H853.4V549.5H852.0V549.5H850.6V549.5H849.2V549.5H847.8V549.5H846.4V549.5H845.0V549.5H843.6V549.5H842.2V549.5H840.8V549.5H839.4V549.5H838.0V550.2H836.6V550.2H835.2V550.2H833.8V550.2H832.4V550.2H831.0V550.2H829.6V550.2H828.2V550.2H826.8V550.9H825.4Z" fill="#d2cfcf"/>
<rect x="91" y="420.500" width="1011" height="3" fill="#f4f4f4"/>
<rect x="91" y="205.800" width="1011" height="1.800" fill="#e6e6e6"/>
<rect x="258.1" y="181" width="1.700" height="26" fill="#e6e6e6"/>
<rect x="424.9" y="181" width="1.700" height="26" fill="#e6e6e6"/>
<rect x="591.7" y="181" width="1.700" height="26" fill="#e6e6e6"/>
<rect x="758.4" y="181" width="1.700" height="26" fill="#e6e6e6"/>
<rect x="925.2" y="181" width="1.700" height="26" fill="#e6e6e6"/>
<rect x="1091.9" y="181" width="1.700" height="26" fill="#e6e6e6"/>
<rect x="132.6" y="180" width="1.600" height="482" fill="#8c8c8c"/>
<rect x="249.0" y="180" width="1.600" height="482" fill="#8c8c8c"/>
<rect x="725.5" y="180" width="1.600" height="482" fill="#8c8c8c"/>
<rect x="788.2" y="180" width="1.600" height="482" fill="#8c8c8c"/>
<rect x="824.6" y="180" width="1.600" height="482" fill="#8c8c8c"/>
<rect x="92.600" y="180" width="1.400" height="482" fill="#9a9a9a"/>
<rect x="91" y="180" width="1.800" height="482" fill="#e32222"/>
</svg>
<div class="rt" style="left:3.2px">0</div>
<div class="rt" style="left:169.9px">37248</div>
<div class="rt" style="left:336.7px">74496</div>
<div class="rt" style="left:503.5px">111744</div>
<div class="rt" style="left:670.2px">148992</div>
<div class="rt" style="left:837.0px">186240</div>
<div class="rt" style="left:1003.7px">1</div>
<div class="mk" style="left:4.0px;top:29.5px;width:16px;height:16px"><span>S</span></div>
<div class="mk w" style="left:45.0px;top:55.5px;width:18px;height:16px"><span>SF</span></div>
<div class="mk" style="left:160.5px;top:81.5px;width:16px;height:16px"><span>L</span></div>
<div class="mk w" style="left:637.5px;top:108.0px;width:18px;height:16px"><span>LF</span></div>
<div class="mk w" style="left:700.0px;top:160.0px;width:18px;height:16px"><span>EF</span></div>
<div class="mk" style="left:736.0px;top:134.0px;width:16px;height:16px"><span>E</span></div>
</div>
<svg class="abs" style="left:1090.5px;top:571.0px" width="26" height="25" viewBox="0 0 26 25"><rect width="26" height="25" fill="#2b2b2b"/><circle cx="10.400" cy="10.400" r="6" fill="none" stroke="#8e8e8e" stroke-width="1.800"/><path d="M15 15l7 6.500" stroke="#8e8e8e" stroke-width="2.600" stroke-linecap="round"/><path d="M7.600 10.400h5.600" stroke="#8e8e8e" stroke-width="1.800"/><path d="M10.400 7.600v5.600" stroke="#8e8e8e" stroke-width="1.800"/></svg>
<svg class="abs" style="left:1090.5px;top:597.0px" width="26" height="24" viewBox="0 0 26 24"><rect width="26" height="24" fill="#2b2b2b"/><circle cx="10.400" cy="10.400" r="6" fill="none" stroke="#8e8e8e" stroke-width="1.800"/><path d="M15 15l7 6.500" stroke="#8e8e8e" stroke-width="2.600" stroke-linecap="round"/><path d="M7.600 10.400h5.600" stroke="#8e8e8e" stroke-width="1.800"/></svg>
<svg class="abs" style="left:1038.0px;top:623.5px" width="26" height="25" viewBox="0 0 26 25"><rect width="26" height="25" fill="#2b2b2b"/><circle cx="10.400" cy="10.400" r="6" fill="none" stroke="#8e8e8e" stroke-width="1.800"/><path d="M15 15l7 6.500" stroke="#8e8e8e" stroke-width="2.600" stroke-linecap="round"/><path d="M7.600 10.400h5.600" stroke="#8e8e8e" stroke-width="1.800"/></svg>
<svg class="abs" style="left:1064.0px;top:623.5px" width="26" height="25" viewBox="0 0 26 25"><rect width="26" height="25" fill="#2b2b2b"/><circle cx="10.400" cy="10.400" r="6" fill="none" stroke="#8e8e8e" stroke-width="1.800"/><path d="M15 15l7 6.500" stroke="#8e8e8e" stroke-width="2.600" stroke-linecap="round"/><path d="M7.600 10.400h5.600" stroke="#8e8e8e" stroke-width="1.800"/><path d="M10.400 7.600v5.600" stroke="#8e8e8e" stroke-width="1.800"/></svg>
<div class="lbl" style="left:78.5px;top:689.5px;transform:scaleX(0.915)">START POINT</div>
<div class="val" style="top:681.5px"><span>314</span><svg class="abs" style="left:137px;top:4px" width="16" height="22" viewBox="0 0 16 22"><path d="M8 0l7.500 7.500h-15zM8 22l7.500-7.500h-15z" fill="#565656"/></svg></div>
<div class="lbl" style="left:78.5px;top:729.5px;transform:scaleX(0.935)">LOOP START</div>
<div class="val" style="top:721.5px"><span>35487</span><svg class="abs" style="left:137px;top:4px" width="16" height="22" viewBox="0 0 16 22"><path d="M8 0l7.500 7.500h-15zM8 22l7.500-7.500h-15z" fill="#565656"/></svg></div>
<div class="lbl" style="left:78.5px;top:769.5px;transform:scaleX(0.905)">END POINT</div>
<div class="val" style="top:761.5px"><span>163905</span><svg class="abs" style="left:137px;top:4px" width="16" height="22" viewBox="0 0 16 22"><path d="M8 0l7.500 7.500h-15zM8 22l7.500-7.500h-15z" fill="#565656"/></svg></div>
<div class="lbl" style="left:77.5px;top:811.5px;transform:scaleX(0.930)">LOOP MODE</div>
<div class="val" style="top:802.5px"><span>ON</span><svg class="abs" style="left:137px;top:4px" width="16" height="22" viewBox="0 0 16 22"><path d="M8 0l7.500 7.500h-15zM8 22l7.500-7.500h-15z" fill="#565656"/></svg></div>
<div class="lbl" style="left:77.5px;top:851.8px;transform:scaleX(0.888)">ORIGINAL KEY</div>
<div class="val" style="top:843.8px"><span>72(C 5)</span><svg class="abs" style="left:137px;top:4px" width="16" height="22" viewBox="0 0 16 22"><path d="M8 0l7.500 7.500h-15zM8 22l7.500-7.500h-15z" fill="#565656"/></svg></div>
<div class="hl" style="left:76px;top:677.5px;width:679px"></div>
<div class="hl" style="left:76px;top:717.5px;width:681px"></div>
<div class="hl" style="left:76px;top:758.0px;width:682px"></div>
<div class="hl" style="left:76px;top:798.0px;width:684px"></div>
<div class="hl" style="left:76px;top:838px;width:295px"></div>
<div class="cb" style="left:387.500px;top:689.5px"></div>
<div class="lbl" style="left:412px;top:688.9px;transform:scaleX(.93)">ZERO-X</div>
<div class="cb on" style="left:679.500px;top:689.5px"></div>
<div class="lbl" style="left:707px;top:688.9px;transform:scaleX(.85)">FADE</div>
<div class="cb on" style="left:387.500px;top:729.5px"></div>
<div class="lbl" style="left:412px;top:728.9px;transform:scaleX(.93)">ZERO-X</div>
<div class="cb on" style="left:679.500px;top:729.5px"></div>
<div class="lbl" style="left:707px;top:728.9px;transform:scaleX(.85)">FADE</div>
<div class="cb on" style="left:387.500px;top:769.5px"></div>
<div class="lbl" style="left:412px;top:768.9px;transform:scaleX(.93)">ZERO-X</div>
<div class="cb on" style="left:679.500px;top:769.5px"></div>
<div class="lbl" style="left:707px;top:768.9px;transform:scaleX(.85)">FADE</div>
<div class="btn" style="left:531px;top:683px;width:125px;height:25px;line-height:21px;letter-spacing:-0.35px">Truncate</div>
<div class="btn" style="left:531px;top:723px;width:125px;height:25px;line-height:21px;letter-spacing:-0.35px">Smoothing</div>
<div class="btn" style="left:531px;top:763px;width:125px;height:25px;line-height:21px;letter-spacing:-0.35px">Truncate</div>
<div class="btn" style="left:531px;top:844px;width:125px;height:25px;line-height:21px;letter-spacing:-0.35px">Undo</div>
<div class="abs" style="left:594px;top:804px;width:2px;height:30px;background:#3a3a3a"></div>
<div class="btn" style="left:793px;top:679px;width:125px;height:28.500px"></div>
<svg class="abs" style="left:842px;top:683px" width="30" height="22" viewBox="0 0 30 22"><path d="M1 7h6l7-6v20l-7-6H1z" fill="#8a8a8a"/><g fill="none" stroke="#8a8a8a" stroke-width="1.800"><path d="M17 7q3 4 0 8"/><path d="M20 4.500q5 6.500 0 13"/><path d="M23 2q7 9 0 18"/></g></svg>
</div></div></body></html>
